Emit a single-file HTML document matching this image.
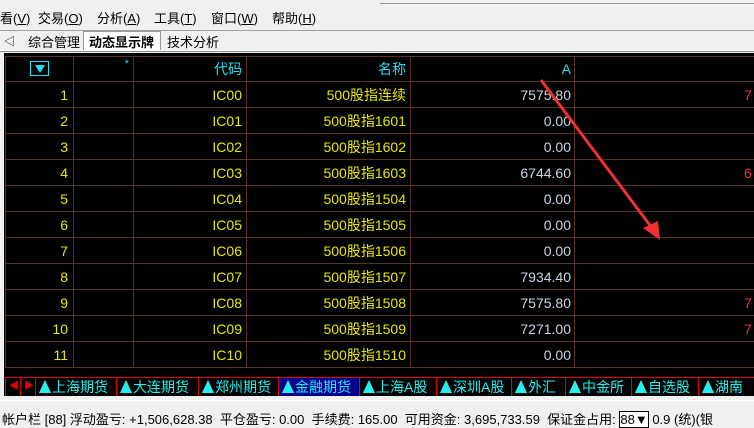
<!DOCTYPE html>
<html><head><meta charset="utf-8"><style>
*{margin:0;padding:0;box-sizing:border-box}
body{width:754px;height:420px;overflow:hidden;background:#f0f0f0;font-family:"Liberation Sans","Noto Sans CJK SC",sans-serif;position:relative}
.a{position:absolute;white-space:nowrap}
.menu{top:8px;font-size:13px;color:#000}
.tab{top:32px;font-size:13px}
#tbl{position:absolute;left:4px;top:53px;width:750px;height:343px;background:#000}
.vl{position:absolute;top:3px;height:312px;width:1px;background:#5a3020}
.hl{position:absolute;left:1px;right:0;height:1px;background:#5a3020}
.c{position:absolute;font-size:14px;text-align:right;line-height:26px}
.y{color:#e8e800}.w{color:#c8d4e4}.cy{color:#20e0f0}.r{color:#f03030}
.bt{position:absolute;top:325px;height:18px;border-left:1px solid #e00000;font-size:14px;color:#20f0f0;line-height:18px;padding-left:3px}
.tri{display:inline-block;width:0;height:0;border-left:6px solid transparent;border-right:6px solid transparent;border-bottom:13px solid #20f0f0;vertical-align:-1px;margin-right:1px;filter:drop-shadow(0 0 0.5px #f00)}
</style></head><body>
<div class="a" style="left:0;top:0;width:754px;height:4px;background:#f0f0f0"></div>
<div class="a" style="left:380px;top:0;width:374px;height:4px;border-bottom:1px solid #999"></div>
<div class="a menu" style="left:0">看(<u>V</u>)</div>
<div class="a menu" style="left:38px">交易(<u>O</u>)</div>
<div class="a menu" style="left:97px">分析(<u>A</u>)</div>
<div class="a menu" style="left:154px">工具(<u>T</u>)</div>
<div class="a menu" style="left:211px">窗口(<u>W</u>)</div>
<div class="a menu" style="left:272px">帮助(<u>H</u>)</div>
<div class="a" style="left:0;top:30px;width:754px;height:1px;background:#a0a0a0"></div>
<div class="a" style="left:4px;top:33px;font-size:11px">◁</div>
<div class="a tab" style="left:28px">综合管理</div>
<div class="a tab" style="left:83px;top:31px;height:20px;width:78px;background:#fff;border:1px solid #999;border-bottom:none"></div>
<div class="a tab" style="left:89px;font-weight:bold">动态显示牌</div>
<div class="a tab" style="left:167px">技术分析</div>
<div class="a" style="left:0;top:50px;width:754px;height:2px;background:#fff;border-bottom:1px solid #888"></div>
<div id="tbl">
<div class="hl" style="top:3px"></div>
<div class="hl" style="top:28px"></div>
<div class="hl" style="top:54px"></div><div class="hl" style="top:80px"></div><div class="hl" style="top:106px"></div><div class="hl" style="top:132px"></div><div class="hl" style="top:158px"></div><div class="hl" style="top:184px"></div><div class="hl" style="top:210px"></div><div class="hl" style="top:236px"></div><div class="hl" style="top:262px"></div><div class="hl" style="top:288px"></div><div class="hl" style="top:314px"></div>
<div class="vl" style="left:1px"></div><div class="vl" style="left:69px"></div><div class="vl" style="left:129px"></div><div class="vl" style="left:242px"></div><div class="vl" style="left:406px"></div><div class="vl" style="left:570px"></div>
<div class="a" style="left:26px;top:8px;width:19px;height:15px;border:1px solid #20e0f0"><div style="margin:3px auto 0;width:0;height:0;border-left:5px solid transparent;border-right:5px solid transparent;border-top:8px solid #20e0f0"></div></div>
<div class="c cy" style="left:70px;width:55px;top:1px;font-size:11px;line-height:20px">*</div>
<div class="c cy" style="left:130px;width:108px;top:3px">代码</div>
<div class="c cy" style="left:243px;width:159px;top:3px">名称</div>
<div class="c cy" style="left:407px;width:160px;top:3px">A</div>
<div id="rows"></div>
</div>
<svg class="a" style="left:0;top:0" width="754" height="420"><line x1="541" y1="80" x2="652" y2="228" stroke="#f03030" stroke-width="3"/><polygon points="660,240 643,228 658,221" fill="#f03030"/></svg>
<div class="a" style="left:0;top:396px;width:754px;height:3px;background:#f0f0f0"></div>
<div class="a" style="left:0;top:400px;width:754px;height:1px;background:#fff"></div>
<div class="a" style="left:2px;top:409px;font-size:13px;color:#000">帐户栏 [88] 浮动盈亏: +1,506,628.38 &nbsp;平仓盈亏: 0.00 &nbsp;手续费: 165.00 &nbsp;可用资金: 3,695,733.59 &nbsp;保证金占用: <span style="border:1px solid #000;background:#fff">88▼</span> 0.9 (统)(银</div>
<script>
var d=[["1","IC00","500股指连续","7575.80","7"],["2","IC01","500股指1601","0.00",""],["3","IC02","500股指1602","0.00",""],["4","IC03","500股指1603","6744.60","6"],["5","IC04","500股指1504","0.00",""],["6","IC05","500股指1505","0.00",""],["7","IC06","500股指1506","0.00",""],["8","IC07","500股指1507","7934.40",""],["9","IC08","500股指1508","7575.80","7"],["10","IC09","500股指1509","7271.00","7"],["11","IC10","500股指1510","0.00",""]];
var h="";d.forEach(function(r,i){var t=29+26*i;
h+='<div class="c y" style="left:2px;width:62px;top:'+t+'px">'+r[0]+'</div><div class="c y" style="left:130px;width:108px;top:'+t+'px">'+r[1]+'</div><div class="c y" style="left:243px;width:159px;top:'+t+'px">'+r[2]+'</div><div class="c w" style="left:407px;width:160px;top:'+t+'px">'+r[3]+'</div>'+(r[4]?'<div class="c r" style="left:740px;width:20px;top:'+t+'px;text-align:left">'+r[4]+'</div>':'');});
document.getElementById('rows').innerHTML=h;
var tabs=[[31,"上海期货"],[112,"大连期货"],[194,"郑州期货"],[274,"金融期货"],[355,"上海A股"],[432,"深圳A股"],[507,"外汇"],[561,"中金所"],[627,"自选股"],[694,"湖南"]];
var b='<div class="bt" style="left:1px;width:15px;color:#e00000;font-size:10px">◀</div><div class="bt" style="left:16px;width:15px;color:#e00000;font-size:10px">▶</div>';
tabs.forEach(function(t,i){var w=(i<9?tabs[i+1][0]:746)-t[0];b+='<div class="bt" style="left:'+t[0]+'px;width:'+w+'px;'+(i==3?'background:#000090;':'')+'"><span class="tri"></span>'+t[1]+'</div>';});
b+='<div class="a" style="left:0;top:324px;width:750px;height:1px;background:#e00000"></div>';
document.getElementById('tbl').insertAdjacentHTML('beforeend',b);
</script>
</body></html>
